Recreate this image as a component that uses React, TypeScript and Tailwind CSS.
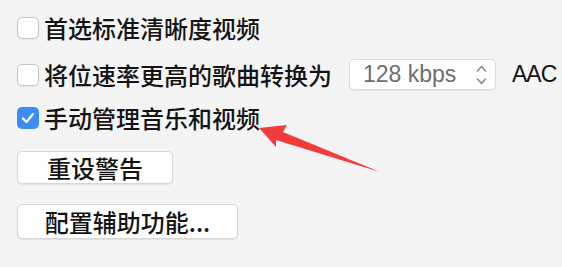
import React from "react";

function Checkbox({ checked }: { checked?: boolean }) {
  if (checked) {
    return (
      <div className="flex h-[22px] w-[22px] shrink-0 items-center justify-center rounded-[5px] bg-[#3b8df5]">
        <svg width="14" height="12" viewBox="0 0 14 12" fill="none">
          <path d="M2 6.5 L5.5 10 L12 2" stroke="white" strokeWidth="2.2" strokeLinecap="round" strokeLinejoin="round" />
        </svg>
      </div>
    );
  }
  return <div className="h-[22px] w-[22px] shrink-0 rounded-[5px] border border-[#c6c6c6] bg-white shadow-[0_1px_1px_rgba(0,0,0,0.05)]"></div>;
}

export default function App() {
  return (
    <div
      className="relative h-[267px] w-[562px] overflow-hidden bg-[#f4f4f4] text-[#141414]"
      style={{ fontFamily: '"Noto Sans CJK SC", "Noto Sans", sans-serif' }}
    >
      <div className="flex flex-col items-start pl-[17px] pt-[17px] text-[24px] font-medium leading-none">
        <div className="flex h-[22px] items-center gap-[5px]">
          <Checkbox />
          <span>首选标准清晰度视频</span>
        </div>

        <div className="mt-[20px] flex h-[31px] items-center">
          <Checkbox />
          <span className="ml-[5px]">将位速率更高的歌曲转换为</span>
          <div className="ml-[17px] flex h-[31px] w-[147px] items-center rounded-[5px] border border-[#dcdcdc] bg-white pl-[13px] pr-[8px] shadow-[0_1px_1px_rgba(0,0,0,0.06)]">
            <span className="text-[23px] font-normal text-[#6e6e6e]" style={{ fontFamily: '"Liberation Sans", Arial, sans-serif' }}>
              128 kbps
            </span>
            <svg className="ml-auto" width="11" height="22" viewBox="0 0 11 22" fill="none">
              <path d="M1.5 7 L5.5 2.5 L9.5 7" stroke="#8a8a8a" strokeWidth="1.6" strokeLinecap="round" strokeLinejoin="round" />
              <path d="M1.5 15 L5.5 19.5 L9.5 15" stroke="#8a8a8a" strokeWidth="1.6" strokeLinecap="round" strokeLinejoin="round" />
            </svg>
          </div>
          <span className="ml-[16px] text-[23px] font-normal tracking-[-1px]" style={{ fontFamily: '"Liberation Sans", Arial, sans-serif' }}>
            AAC
          </span>
        </div>

        <div className="mt-[17px] flex h-[22px] items-center gap-[5px]">
          <Checkbox checked />
          <span>手动管理音乐和视频</span>
        </div>

        <button className="mt-[22px] flex h-[33px] w-[156px] items-center justify-center rounded-[5px] border border-[#d6d6d6] bg-white shadow-[0_1px_1px_rgba(0,0,0,0.08)]">
          重设警告
        </button>

        <button className="mt-[20px] flex h-[35px] w-[221px] items-center justify-center rounded-[5px] border border-[#d6d6d6] bg-white shadow-[0_1px_1px_rgba(0,0,0,0.08)]">
          配置辅助功能...
        </button>
      </div>

      <svg className="absolute left-0 top-0" width="562" height="267" viewBox="0 0 562 267">
        <polygon points="259,128 287,125 283,132 380,172 276,140 276,147" fill="#f23b3b" />
      </svg>
    </div>
  );
}
